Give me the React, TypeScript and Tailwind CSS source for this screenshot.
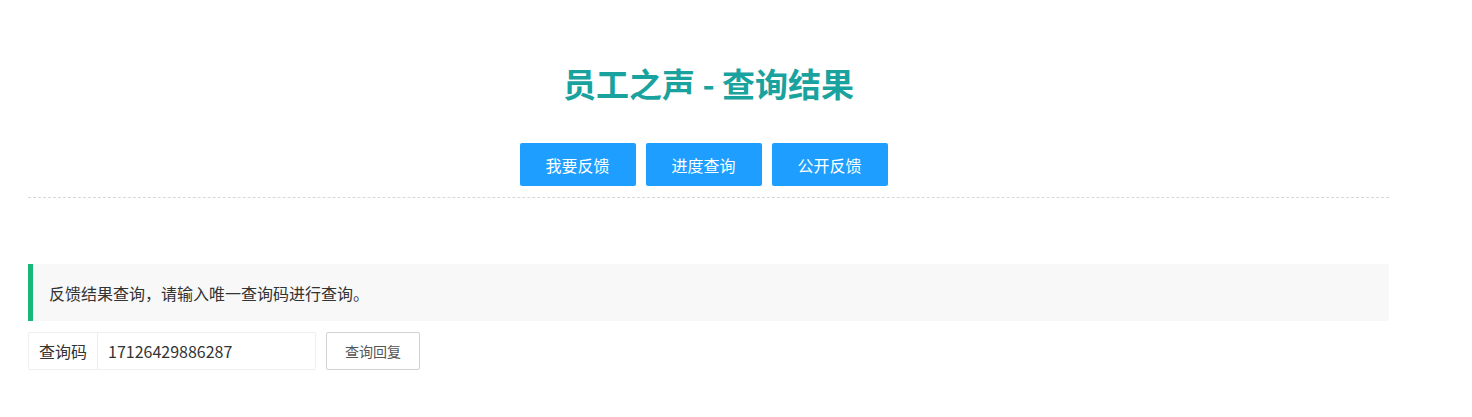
import React from "react";

export default function App() {
  const font = { fontFamily: '"Microsoft YaHei", "Noto Sans CJK SC", "Noto Sans", sans-serif' };
  return (
    <div className="w-[1472px] h-[417px] bg-white" style={font}>
      <div className="ml-[28px] w-[1361px] pt-[62px]">
        <h1 className="text-center text-[33px] leading-[42px] font-bold text-[#1aa39e]">员工之声 - 查询结果</h1>
        <div className="mt-[39px] flex justify-center gap-[10px] pr-[10px] pb-[11px] border-b border-dashed border-[#d8d8d8]">
          {["我要反馈", "进度查询", "公开反馈"].map((t) => (
            <button key={t} className="w-[116px] h-[43px] rounded-[2px] bg-[#1e9fff] text-white text-[16px]">
              {t}
            </button>
          ))}
        </div>
        <div className="mt-[66px] h-[57px] flex items-center bg-[#f8f8f8] border-l-[5px] border-[#16b777] pl-[16px] text-[16px] text-[#333]">
          反馈结果查询，请输入唯一查询码进行查询。
        </div>
        <div className="mt-[11px] flex items-center">
          <div className="flex h-[38px]">
            <div className="w-[70px] h-[38px] flex items-center justify-center border border-[#eee] rounded-l-[2px] text-[16px] text-[#333]">
              查询码
            </div>
            <div className="w-[218px] h-[38px] flex items-center pl-[10px] border border-l-0 border-[#eee] rounded-r-[2px] text-[16px] text-[#333]">
              17126429886287
            </div>
          </div>
          <button className="ml-[10px] w-[94px] h-[38px] border border-[#d2d2d2] rounded-[2px] bg-white text-[14px] text-[#555]">
            查询回复
          </button>
        </div>
      </div>
    </div>
  );
}
